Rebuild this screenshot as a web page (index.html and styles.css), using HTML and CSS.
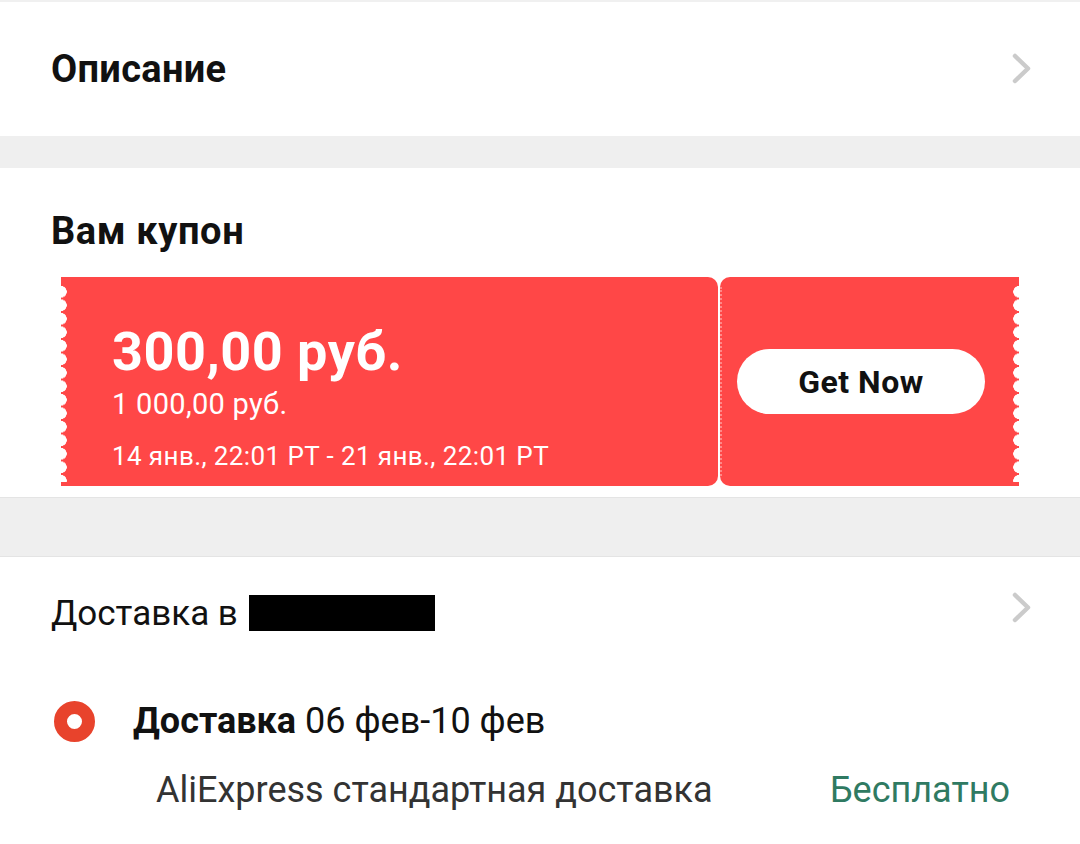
FILE: index.html
```html
<!DOCTYPE html>
<html lang="ru">
<head>
  <meta charset="UTF-8">
  <title>Купон</title>
  <meta name="viewport" content="width=device-width, initial-scale=1">
  <link rel="stylesheet" href="styles.css">
</head>
<body>

  <div class="row desc-row">
    <h2 class="row-title">Описание</h2>
    <svg class="chevron" width="20" height="32" viewBox="0 0 20 32">
      <polyline points="3,3 16,15.5 3,28" fill="none" stroke="#cbcbcb" stroke-width="4.5" stroke-linecap="round" stroke-linejoin="round"/>
    </svg>
  </div>

  <div class="divider"></div>

  <div class="coupon-section">
    <h2 class="row-title">Вам купон</h2>

    <div class="coupon">
      <div class="coupon-main">
        <div class="coupon-amount">300,00 руб.</div>
        <div class="coupon-min">1 000,00 руб.</div>
        <div class="coupon-dates">14 янв., 22:01 PT - 21 янв., 22:01 PT</div>
      </div>
      <div class="coupon-side">
        <button class="get-btn">Get Now</button>
      </div>
    </div>
  </div>

  <div class="divider divider-wide"></div>

  <div class="shipping">
    <div class="row ship-row">
      <div class="ship-to">Доставка в <span class="hidden-addr"></span></div>
      <svg class="chevron chevron-up" width="20" height="32" viewBox="0 0 20 32">
        <polyline points="3,3 16,15.5 3,28" fill="none" stroke="#cbcbcb" stroke-width="4.5" stroke-linecap="round" stroke-linejoin="round"/>
      </svg>
    </div>

    <div class="ship-option">
      <span class="radio"></span>
      <div class="ship-date"><b>Доставка</b> 06 фев-10 фев</div>
    </div>

    <div class="ship-method">
      <span>AliExpress стандартная доставка</span>
      <span class="free">Бесплатно</span>
    </div>
  </div>

</body>
</html>
```

FILE: styles.css
```css
body {
  margin: 0;
  background: #fff;
  font-family: Roboto, 'Noto Sans', sans-serif;
  color: #111;
  width: 1080px;
  border-top: 2px solid #f0f0f0;
}

.row {
  display: flex;
  align-items: center;
  justify-content: space-between;
  padding: 0 50px 0 51px;
}

.row-title {
  margin: 0;
  font-size: 38px;
  line-height: 1;
  font-weight: 700;
  color: #111;
  letter-spacing: 0.3px;
}

.desc-row {
  height: 134px;
}

.chevron {
  display: block;
  margin-right: -2px;
}

.chevron-up {
  margin-bottom: 10px;
}

.divider {
  height: 32px;
  background: #efefef;
}

.divider-wide {
  height: 58px;
  border-top: 1px solid #e4e4e4;
  border-bottom: 1px solid #e4e4e4;
}

/* coupon */

.coupon-section {
  padding: 44px 61px 11px 51px;
}

.coupon-section .row-title {
  letter-spacing: 0.6px;
}

.coupon {
  display: flex;
  gap: 2px;
  margin: 27px 0 0 10px;
  height: 209px;
}

.coupon-main,
.coupon-side {
  position: relative;
  background: #ff4747;
  color: #fff;
}

.coupon-main {
  flex: 1;
  padding: 48px 0 0 51px;
  border-radius: 0 10px 10px 0;
}

.coupon-side {
  width: 299px;
  border-radius: 10px 0 0 10px;
  display: flex;
  align-items: center;
  padding-left: 17px;
  box-sizing: border-box;
}

.coupon-side::after {
  content: "";
  position: absolute;
  left: 0;
  top: 10px;
  bottom: 10px;
  border-left: 2px dotted rgba(255, 255, 255, 0.35);
}

/* scalloped edges */
.coupon-main::before,
.coupon-side::before {
  content: "";
  position: absolute;
  top: 8px;
  bottom: 4px;
  width: 8px;
  background: radial-gradient(circle at 0 50%, #fff 5.5px, transparent 6px) 0 0 / 8px 13.5px repeat-y;
}

.coupon-main::before {
  left: 0;
}

.coupon-side::before {
  right: 0;
  transform: scaleX(-1);
}

.coupon-amount {
  font-size: 54px;
  font-weight: 700;
  line-height: 1;
  letter-spacing: 0.5px;
}

.coupon-min {
  font-size: 29px;
  line-height: 1;
  margin-top: 11px;
  letter-spacing: 0.3px;
}

.coupon-dates {
  font-size: 26px;
  line-height: 1;
  margin-top: 24px;
  letter-spacing: 0.4px;
}

.get-btn {
  width: 248px;
  height: 65px;
  border: none;
  border-radius: 33px;
  background: #fff;
  color: #111;
  font-family: Roboto, sans-serif;
  font-size: 32px;
  font-weight: 700;
  letter-spacing: 0.5px;
  cursor: pointer;
}

/* shipping */

.ship-row {
  height: 112px;
}

.ship-to {
  font-size: 35px;
  color: #111;
  display: flex;
  align-items: center;
  gap: 11px;
}

.hidden-addr {
  display: inline-block;
  width: 186px;
  height: 36px;
  background: #000;
}

.ship-option {
  display: flex;
  align-items: center;
  padding: 30px 0 0 54px;
}

.radio {
  width: 15px;
  height: 15px;
  border: 13px solid #e8432c;
  border-radius: 50%;
  margin-right: 38px;
}

.ship-date {
  font-size: 36px;
  line-height: 44px;
  color: #111;
}

.ship-date b {
  font-weight: 700;
}

.ship-method {
  display: flex;
  justify-content: space-between;
  padding: 25px 70px 0 156px;
  font-size: 36px;
  line-height: 44px;
  color: #333;
}

.free {
  color: #2f7a62;
}
```
